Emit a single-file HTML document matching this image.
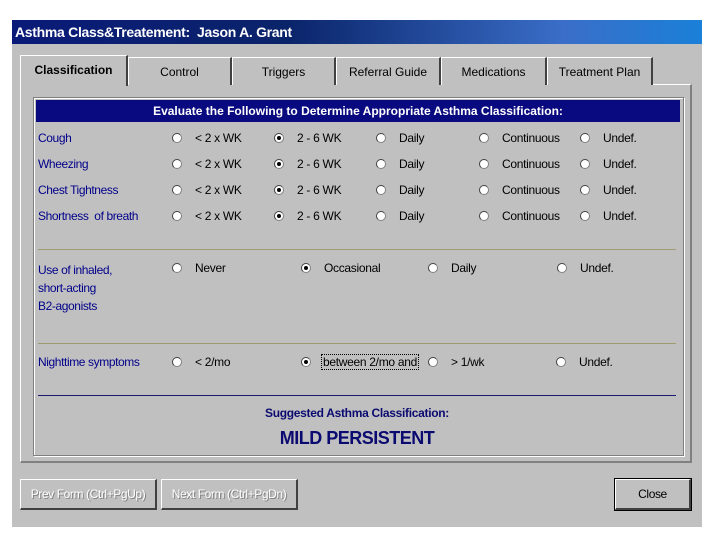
<!DOCTYPE html><html><head><style>
body{margin:0;width:720px;height:540px;background:#fff;position:relative;overflow:hidden;font-family:"Liberation Sans",sans-serif;}
.a{position:absolute;white-space:nowrap}
.win{left:12px;top:20px;width:690px;height:507px;background:#c0c0c0}
.title{left:12px;top:20px;width:690px;height:24px;background:linear-gradient(90deg,#0a1a78 0%,#0a246a 40%,#3a6ec8 80%,#1a80d8 100%);color:#fff;font-size:14px;line-height:24px;font-weight:bold;padding-left:3px;box-sizing:border-box;letter-spacing:-0.3px}
.tab{top:57px;height:28px;border:1px solid #fff;border-right:2px solid #404040;border-bottom:none;font-size:12px;line-height:28px;text-align:center;color:#000;box-sizing:border-box;background:#c0c0c0}
.panel{left:20px;top:84px;width:672px;height:379px;border-top:1px solid #fff;border-left:1px solid #fff;border-right:2px solid #808080;border-bottom:2px solid #808080;box-sizing:border-box}
.grp{left:33px;top:97px;width:651px;height:359px;border:1px solid #808080;box-shadow:1px 1px 0 #fff inset, 1px 1px 0 #fff;box-sizing:border-box}
.hdr{left:36px;top:100px;width:644px;height:22px;background:#0a0a80;color:#fff;font-size:12px;font-weight:bold;line-height:22px;text-align:center}
.lbl{color:#00008a;font-size:12px;letter-spacing:-0.4px}
.opt{color:#000;font-size:12px;letter-spacing:-0.3px}
.r{width:10px;height:10px;border-radius:50%;background:#fff;border:1px solid #808080;border-top-color:#404040;border-left-color:#404040;box-sizing:border-box}
.r.on::after{content:"";position:absolute;left:2px;top:2px;width:4px;height:4px;border-radius:50%;background:#000}
.line{height:1px;left:38px;width:638px}
.btn{top:479px;height:31px;border:1px solid #fff;border-right:2px solid #404040;border-bottom:2px solid #404040;box-sizing:border-box;font-size:12px;line-height:28px;text-align:center;color:#fff;text-shadow:1px 1px 0 #808080;letter-spacing:-0.4px}
</style></head><body>
<div class="a win"></div>
<div class="a title">Asthma Class&amp;Treatement:&nbsp; Jason A. Grant</div>
<div class="a panel"></div>
<div class="a tab" style="left:20px;top:55px;height:31px;width:108px;font-weight:bold;border-bottom:none;z-index:2">Classification</div>
<div class="a tab" style="left:128px;width:104px">Control</div>
<div class="a tab" style="left:232px;width:104px">Triggers</div>
<div class="a tab" style="left:336px;width:105px">Referral Guide</div>
<div class="a tab" style="left:441px;width:106px">Medications</div>
<div class="a tab" style="left:547px;width:106px">Treatment Plan</div>
<div class="a grp"></div>
<div class="a hdr">Evaluate the Following to Determine Appropriate Asthma Classification:</div>

<div class="a lbl" style="left:38px;top:131px">Cough</div>
<div class="a lbl" style="left:38px;top:157px">Wheezing</div>
<div class="a lbl" style="left:38px;top:183px">Chest Tightness</div>
<div class="a lbl" style="left:38px;top:209px">Shortness&nbsp; of breath</div>

<div id="rows"></div>
<script>
var ys=[138,164,190,216],xs=[177,279,381,484,585],t=["&lt; 2 x WK","2 - 6 WK","Daily","Continuous","Undef."];
var h="";ys.forEach(function(y){xs.forEach(function(x,i){h+='<div class="a r'+(i==1?' on':'')+'" style="left:'+(x-5)+'px;top:'+(y-5)+'px"></div><div class="a opt" style="left:'+(x+18)+'px;top:'+(y-7)+'px">'+t[i]+'</div>';});});
var xs2=[177,306,433,562],t2=["Never","Occasional","Daily","Undef."];
xs2.forEach(function(x,i){h+='<div class="a r'+(i==1?' on':'')+'" style="left:'+(x-5)+'px;top:263px"></div><div class="a opt" style="left:'+(x+18)+'px;top:261px">'+t2[i]+'</div>';});
var t3=["&lt; 2/mo","between 2/mo and","&gt; 1/wk","Undef."],xs3=[177,306,433,561],of=[18,16,18,18];
xs3.forEach(function(x,i){h+='<div class="a r'+(i==1?' on':'')+'" style="left:'+(x-5)+'px;top:357px"></div><div class="a opt" style="left:'+(x+of[i])+'px;top:355px'+(i==1?';outline:1px dotted #000;padding:0 1px':'')+'">'+t3[i]+'</div>';});
document.getElementById('rows').innerHTML=h;
</script>

<div class="a line" style="top:249px;background:#a09a70"></div>
<div class="a lbl" style="left:38px;top:261px;line-height:18px">Use of inhaled,<br>short-acting<br>B2-agonists</div>
<div class="a line" style="top:343px;background:#a09a70"></div>
<div class="a lbl" style="left:38px;top:355px">Nighttime symptoms</div>
<div class="a line" style="top:395px;background:#1a1a70"></div>
<div class="a" style="left:38px;width:638px;top:406px;text-align:center;color:#0a0a70;font-size:12px;font-weight:bold;letter-spacing:-0.3px">Suggested Asthma Classification:</div>
<div class="a" style="left:38px;width:638px;top:428px;text-align:center;color:#0a0a70;font-size:18px;font-weight:bold;letter-spacing:-0.5px">MILD PERSISTENT</div>

<div class="a btn" style="left:20px;width:137px">Prev Form (Ctrl+PgUp)</div>
<div class="a btn" style="left:161px;width:137px">Next Form (Ctrl+PgDn)</div>
<div class="a btn" style="left:615px;width:76px;color:#000;text-shadow:none;outline:1px solid #000">Close</div>
</body></html>
